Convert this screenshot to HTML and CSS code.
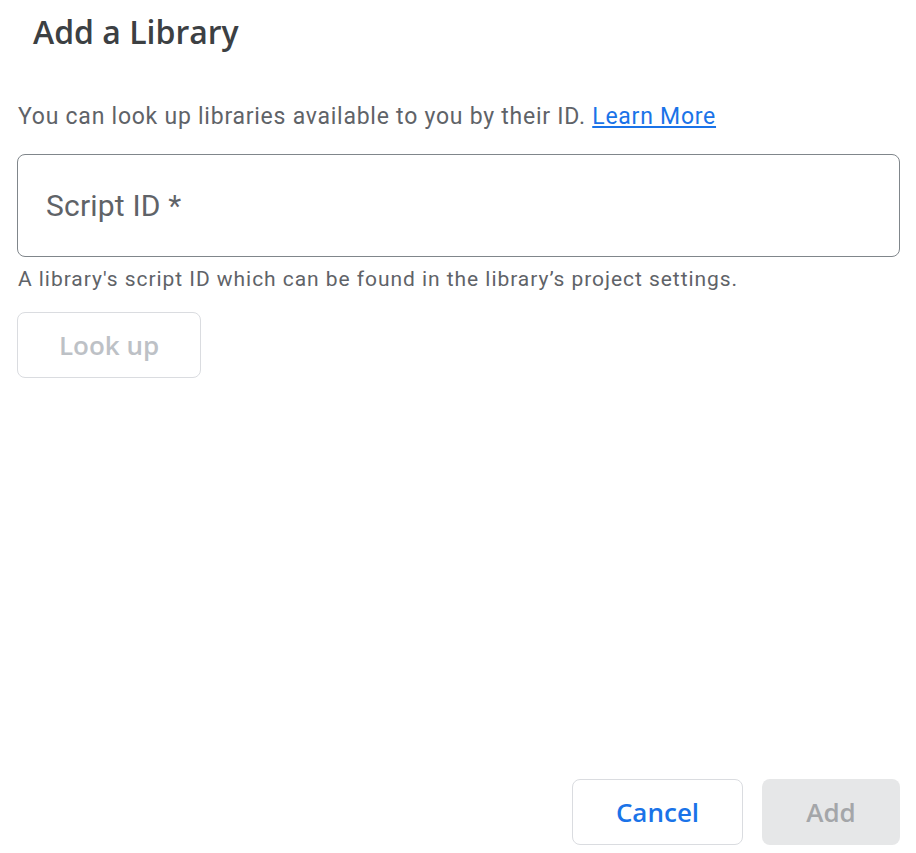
FILE: index.html
```html
<!DOCTYPE html>
<html>
<head>
<meta charset="utf-8">
<link rel="stylesheet" href="styles.css">
</head>
<body>
<div class="dialog">
  <h1 class="title">Add a Library</h1>
  <p class="desc">You can look up libraries available to you by their ID. <a class="link" href="#">Learn More</a></p>
  <div class="field">
    <span class="label">Script ID *</span>
  </div>
  <p class="helper">A library's script ID which can be found in the library’s project settings.</p>
  <div class="lookup-row">
    <button class="btn btn-outline btn-disabled-text">Look up</button>
  </div>
  <div class="footer">
    <button class="btn btn-outline btn-cancel">Cancel</button>
    <button class="btn btn-add">Add</button>
  </div>
</div>
</body>
</html>
```

FILE: styles.css
```css
html, body {
  margin: 0;
  padding: 0;
  background: #ffffff;
}
.dialog {
  box-sizing: border-box;
  height: 853px;
  padding: 0 16px 8px 17px;
  display: flex;
  flex-direction: column;
  font-family: Roboto, "Liberation Sans", sans-serif;
}
.title {
  margin: 12px 0 0 16px;
  font-family: "Open Sans", Roboto, sans-serif;
  font-weight: 600;
  font-size: 32px;
  line-height: 40px;
  color: #3c4043;
}
.desc {
  margin: 50px 0 0 1px;
  font-size: 23px;
  line-height: 30px;
  color: #5f6368;
  letter-spacing: 0.75px;
}
.link {
  color: #1a73e8;
  text-decoration: underline;
}
.field {
  margin-top: 22px;
  height: 101px;
  border: 1px solid #80868b;
  border-radius: 8px;
  display: flex;
  align-items: center;
  padding-left: 28px;
}
.label {
  font-size: 30px;
  letter-spacing: 0.2px;
  color: #5f6368;
}
.helper {
  margin: 8px 0 0 1px;
  font-size: 21px;
  line-height: 28px;
  color: #5f6368;
  letter-spacing: 0.95px;
}
.lookup-row {
  margin-top: 19px;
  display: flex;
}
.btn {
  box-sizing: border-box;
  height: 66px;
  border-radius: 8px;
  font-family: "Open Sans", Roboto, sans-serif;
  font-weight: 600;
  font-size: 26px;
  background: #ffffff;
  padding: 0;
  cursor: pointer;
}
.btn-outline {
  border: 1px solid #dadce0;
}
.btn-disabled-text {
  width: 184px;
  color: #bdc1c6;
}
.footer {
  margin-top: auto;
  display: flex;
  justify-content: flex-end;
  gap: 19px;
}
.btn-cancel {
  width: 171px;
  color: #1a73e8;
}
.btn-add {
  width: 138px;
  border: none;
  background: #e6e7e8;
  color: #a4a6a9;
}
```
